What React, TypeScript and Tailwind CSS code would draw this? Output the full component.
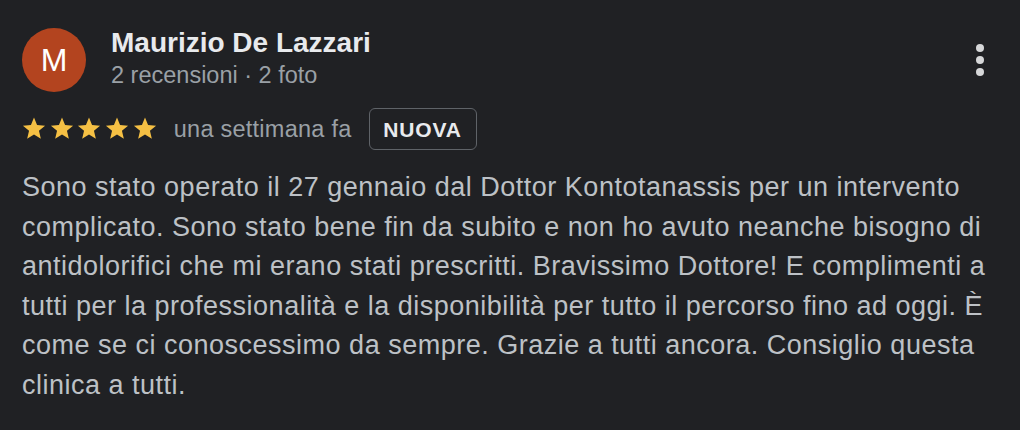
const Star = () => (
  <svg width="24" height="23" viewBox="0 0 24 23" className="shrink-0">
    <path
      d="M12 0.6l3.05 7.45 8.03 0.62-6.13 5.2 1.9 7.83L12 17.5l-6.85 4.2 1.9-7.83-6.13-5.2 8.03-0.62z"
      fill="#f5c044"
    />
  </svg>
);

export default function App() {
  return (
    <div
      className="w-[1020px] h-[430px] bg-[#202124] px-[22px] overflow-hidden"
      style={{ fontFamily: '"Liberation Sans", Arial, Helvetica, sans-serif' }}
    >
      {/* header */}
      <div className="flex items-start pt-[26px]">
        <div className="mt-[2px] w-[64px] h-[64px] rounded-full bg-[#b3441f] flex items-center justify-center shrink-0">
          <span className="text-white text-[32px] leading-none">M</span>
        </div>
        <div className="ml-[25px] flex flex-col">
          <span className="text-[#e8eaed] text-[28px] font-bold leading-[34px]">Maurizio De Lazzari</span>
          <span className="text-[#9aa0a6] text-[23.5px] leading-[30px]">2 recensioni · 2 foto</span>
        </div>
        <svg width="20" height="40" viewBox="0 0 20 40" className="ml-auto mr-[8px] self-center mt-[1px]">
          <circle cx="10" cy="8" r="4" fill="#d6d7d9" />
          <circle cx="10" cy="20" r="4" fill="#d6d7d9" />
          <circle cx="10" cy="32" r="4" fill="#d6d7d9" />
        </svg>
      </div>

      {/* rating row */}
      <div className="flex items-center h-[42px] mt-[16px]">
        <div className="flex items-center gap-[3.7px] mt-[-1px]">
          <Star />
          <Star />
          <Star />
          <Star />
          <Star />
        </div>
        <span className="ml-[17px] text-[#9aa0a6] text-[23.5px] leading-[30px] tracking-[0.25px]">
          una settimana fa
        </span>
        <div className="ml-[17px] h-[42px] w-[108px] rounded-[6px] border-[1.5px] border-[#5f6368] flex items-center justify-center">
          <span className="text-[#e8eaed] text-[21px] font-bold tracking-[0.8px] leading-none">NUOVA</span>
        </div>
      </div>

      {/* body */}
      <p className="mt-[18px] text-[#bdc1c6] text-[27px] leading-[39.6px] tracking-[0.5px]">
        Sono stato operato il 27 gennaio dal Dottor Kontotanassis per un intervento complicato. Sono stato bene fin
        da subito e non ho avuto neanche bisogno di antidolorifici che mi erano stati prescritti. Bravissimo
        Dottore! E complimenti a tutti per la professionalità e la disponibilità per tutto il percorso fino ad oggi.
        È come se ci conoscessimo da sempre. Grazie a tutti ancora. Consiglio questa clinica a tutti.
      </p>
    </div>
  );
}
